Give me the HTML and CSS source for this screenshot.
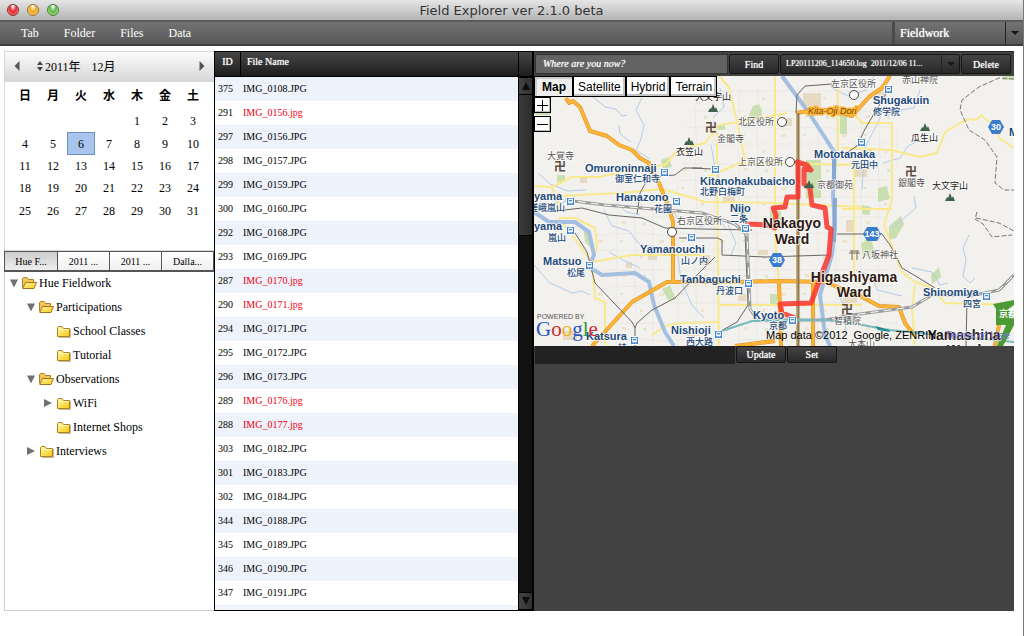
FILE: index.html
```html
<!DOCTYPE html>
<html lang="en">
<head>
<meta charset="utf-8">
<title>Field Explorer ver 2.1.0 beta</title>
<link rel="stylesheet" href="styles.css">
</head>
<body>
<svg class="sprites" aria-hidden="true">
  <defs>
    <linearGradient id="fold" x1="0" y1="0" x2="1" y2="1"><stop offset="0" stop-color="#fff9a0"/><stop offset="1" stop-color="#f8c915"/></linearGradient>
    <symbol id="closed" viewBox="0 0 15 14"><path d="M1.5 12.500V3.500L2.500 2.500H6L7.500 4.500H13.500V12.500Z" fill="url(#fold)" stroke="#b08024"/><path d="M2.500 5.500H12.500" stroke="#fffbd0"/><path d="M14.500 5V13.500H3" fill="none" stroke="#8b6b35" opacity=".5"/></symbol>
    <symbol id="open" viewBox="0 0 15 14"><path d="M.5 11.500V2.500L1.500 1.500H5L6.500 3.500H11.500V6" fill="#f3c65a" stroke="#b08024"/><path d="M.8 12.500L3.500 6.500H14.500L12 12.500Z" fill="url(#fold)" stroke="#a4731f"/></symbol>
    <symbol id="down" viewBox="0 0 10 10"><path d="M1 1.500H9L5 9.500Z" fill="#6b726f"/></symbol>
    <symbol id="right" viewBox="0 0 10 10"><path d="M1 1L9 5L1 9Z" fill="#6b726f"/></symbol>
  </defs>
</svg>
<div class="window">
  <header class="titlebar">
    <div class="lights"><button class="light red" aria-label="Close"></button><button class="light amber" aria-label="Minimize"></button><button class="light green" aria-label="Zoom"></button></div>
    <h1 class="title">Field Explorer ver 2.1.0 beta</h1>
  </header>
  <nav class="menubar">
    <button class="menu">Tab</button><button class="menu">Folder</button><button class="menu">Files</button><button class="menu">Data</button>
    <div class="combo project"><select class="combo-select" aria-label="Project"><option>Fieldwork</option></select><span class="combo-arrow"></span></div>
  </nav>
  <main class="panels">
    <aside class="side">
      <section class="calendar">
        <div class="cal-head">
          <button class="step" aria-label="Previous month"><svg width="6" height="10"><path d="M5.500 0V10L.5 5Z" fill="#555"/></svg></button>
          <button class="year"><svg width="6" height="10"><path d="M0 4L3 0L6 4ZM0 6L3 10L6 6Z" fill="#444"/></svg>2011年</button>
          <span class="month">12月</span>
          <button class="step next" aria-label="Next month"><svg width="6" height="10"><path d="M.5 0V10L5.500 5Z" fill="#555"/></svg></button>
        </div>
        <table class="days">
          <thead><tr><th>日</th><th>月</th><th>火</th><th>水</th><th>木</th><th>金</th><th>土</th></tr></thead>
          <tbody>
            <tr><td></td><td></td><td></td><td></td><td>1</td><td>2</td><td>3</td></tr>
            <tr><td>4</td><td>5</td><td class="today">6</td><td>7</td><td>8</td><td>9</td><td>10</td></tr>
            <tr><td>11</td><td>12</td><td>13</td><td>14</td><td>15</td><td>16</td><td>17</td></tr>
            <tr><td>18</td><td>19</td><td>20</td><td>21</td><td>22</td><td>23</td><td>24</td></tr>
            <tr><td>25</td><td>26</td><td>27</td><td>28</td><td>29</td><td>30</td><td>31</td></tr>
          </tbody>
        </table>
      </section>
      <div class="tabs"><button class="tab active">Hue F...</button><button class="tab">2011 ...</button><button class="tab">2011 ...</button><button class="tab">Dalla...</button></div>
      <ul class="tree">
        <li><div class="node"><svg class="tri"><use href="#down"/></svg><svg class="folder"><use href="#open"/></svg>Hue Fieldwork</div>
          <ul>
            <li><div class="node"><svg class="tri"><use href="#down"/></svg><svg class="folder"><use href="#open"/></svg>Participations</div>
              <ul>
                <li><div class="node"><span class="tri"></span><svg class="folder"><use href="#closed"/></svg>School Classes</div></li>
                <li><div class="node"><span class="tri"></span><svg class="folder"><use href="#closed"/></svg>Tutorial</div></li>
              </ul></li>
            <li><div class="node"><svg class="tri"><use href="#down"/></svg><svg class="folder"><use href="#open"/></svg>Observations</div>
              <ul>
                <li><div class="node"><svg class="tri"><use href="#right"/></svg><svg class="folder"><use href="#closed"/></svg>WiFi</div></li>
                <li><div class="node"><span class="tri"></span><svg class="folder"><use href="#closed"/></svg>Internet Shops</div></li>
              </ul></li>
            <li><div class="node"><svg class="tri"><use href="#right"/></svg><svg class="folder"><use href="#closed"/></svg>Interviews</div></li>
          </ul></li>
      </ul>
    </aside>
    <section class="files">
      <div class="list">
        <table class="file-table">
          <thead><tr><th class="id">ID</th><th>File Name</th></tr></thead>
          <tbody>
            <tr><td>375</td><td>IMG_0108.JPG</td></tr>
            <tr><td>291</td><td class="hot">IMG_0156.jpg</td></tr>
            <tr><td>297</td><td>IMG_0156.JPG</td></tr>
            <tr><td>298</td><td>IMG_0157.JPG</td></tr>
            <tr><td>299</td><td>IMG_0159.JPG</td></tr>
            <tr><td>300</td><td>IMG_0160.JPG</td></tr>
            <tr><td>292</td><td>IMG_0168.JPG</td></tr>
            <tr><td>293</td><td>IMG_0169.JPG</td></tr>
            <tr><td>287</td><td class="hot">IMG_0170.jpg</td></tr>
            <tr><td>290</td><td class="hot">IMG_0171.jpg</td></tr>
            <tr><td>294</td><td>IMG_0171.JPG</td></tr>
            <tr><td>295</td><td>IMG_0172.JPG</td></tr>
            <tr><td>296</td><td>IMG_0173.JPG</td></tr>
            <tr><td>289</td><td class="hot">IMG_0176.jpg</td></tr>
            <tr><td>288</td><td class="hot">IMG_0177.jpg</td></tr>
            <tr><td>303</td><td>IMG_0182.JPG</td></tr>
            <tr><td>301</td><td>IMG_0183.JPG</td></tr>
            <tr><td>302</td><td>IMG_0184.JPG</td></tr>
            <tr><td>344</td><td>IMG_0188.JPG</td></tr>
            <tr><td>345</td><td>IMG_0189.JPG</td></tr>
            <tr><td>346</td><td>IMG_0190.JPG</td></tr>
            <tr><td>347</td><td>IMG_0191.JPG</td></tr>
            <tr><td></td><td></td></tr>
          </tbody>
        </table>
      </div>
      <div class="scroll">
        <div class="scroll-cap"></div>
        <button class="scroll-btn" aria-label="Scroll up"><svg width="8" height="8"><path d="M4 0L8 8H0Z" fill="#0c0c0c"/></svg></button>
        <div class="thumb"></div>
        <div class="track"></div>
        <button class="scroll-btn" aria-label="Scroll down"><svg width="8" height="8"><path d="M4 8L8 0H0Z" fill="#0c0c0c"/></svg></button>
      </div>
    </section>
    <section class="place">
      <div class="toolbar">
        <input class="where" type="text" placeholder="Where are you now?" aria-label="Where are you now?">
        <button class="dark">Find</button>
        <div class="combo log"><select class="combo-select" aria-label="Log file"><option>LP20111206_114650.log&nbsp; 2011/12/06 11...</option></select><span class="combo-arrow"></span></div>
        <button class="dark">Delete</button>
      </div>
      <div class="map">
        <svg class="map-art" viewBox="534 76 480 270" preserveAspectRatio="xMidYMid slice">
          <defs>
            <symbol id="stn" viewBox="0 0 9 9"><rect x=".5" y=".5" width="8" height="8" rx="1" fill="#3f83cc" stroke="#fff"/><path d="M2.500 2H6.500V6H2.500ZM3 7.500L3.500 6.500M6 7.500L5.500 6.500" fill="#fff" stroke="#fff" stroke-width=".6"/><path d="M3 3H6V4.300H3Z" fill="#3f83cc"/></symbol>
            <symbol id="mt" viewBox="0 0 10 8"><path d="M0 8L2 4L3 5L5 0L7 5L8 3L10 8Z" fill="#40614c"/></symbol>
            <pattern id="streets" width="61" height="53" patternUnits="userSpaceOnUse"><path d="M0 5H61M0 22L30 21L61 24M0 38H61M7 0V53M24 0L26 53M43 0V53" stroke="#e8e6e1" stroke-width=".8" fill="none"/><path d="M12 9h4v3h-4zM49 28h5v3h-5zM30 44h3v3h-3z" fill="#efe3cd"/><path d="M33 10h3v3h-3zM10 28h3v2h-3z" fill="#dce7cb"/></pattern>
          </defs>
          <rect x="534" y="76" width="480" height="270" fill="#f3f1ed"/>
          <path d="M690 90H890L900 150L885 225L900 346H600L595 235L680 180Z" fill="url(#streets)"/>
          <g fill="#c9dfaf">
            <path d="M534 111h16v4h-16zM753 106l6-2 3 6-1 8-8 3-4-6zM661 160l8-3 3 10-9 2zM806 160h15v38h-15zM770 211h11v13h-11zM889 226l12-10 3 8-8 14-7 2zM861 243l10-3 4 12-12 6zM931 275l8-8 2 10-9 7zM662 289l8-4 6 14-8 1zM878 188l9-2 3 13-12 3zM583 225l7 10 3 15-8-8zM737 205h9v10h-9zM770 294h7v10h-7zM840 110h7v24h-7zM718 124h7v6h-7zM1003 76h11v4h-11zM557 175h8v7h-8zM862 205l9 2-2 8-7-1z"/>
          </g>
          <g fill="#e7dac3">
            <path d="M803 93h18v13h-18zM853 165h14v12h-14zM648 252h9v8h-9zM700 255h10v10h-10zM758 250h10v5h-10zM563 331h14v9h-14zM862 148h10v9h-10zM723 194h12v8h-12zM846 220h8v12h-8zM738 294h8v7h-8zM785 118h7v8h-7zM626 262h6v6h-6zM687 330h12v6h-12zM843 295h14v8h-14zM580 178h7v5h-7zM878 91h7v5h-7z"/>
          </g>
          <g class="stream">
            <path d="M593 97L605 107L616 109L622 116L627 115M642 98L636 110L644 125L641 139L636 150L650 159M619 125L620 134L631 142M617 203L626 212L640 215M604 210L612 226L629 231L640 245L660 247M534 265L550 283L572 293L582 291L590 295M609 252L623 260L640 268M711 145L714 163L719 178L714 196M720 88L724 107L713 118M728 225L736 243L731 255M699 227L719 220L727 230M663 204L674 212L680 225M874 76L866 90L848 96L832 88M887 116L900 110L914 108L920 90M914 196L916 208L904 218L892 229M969 235L963 248L966 260L963 276L970 283L975 278M912 268L932 272L940 285L948 283M838 295L848 312L845 330M856 270L872 276L877 290L902 296M883 163L900 158L908 146L916 142M884 110L865 148L862 190M552 200L562 203L575 196M677 248L681 281L692 305L704 318M538 173L550 184L568 191L586 190"/>
          </g>
          <g class="minor">
            <path d="M534 186L552 187L572 177L599 177L632 170L665 165L675 153L689 147L705 143L719 125L739 122L787 113"/>
            <path d="M534 194L560 196L620 193L662 189L690 197L705 202L775 203L862 207"/>
            <path d="M719 76L729 87L737 122L745 160M717 133V183L719 346M775 76V240L779 281M740 163L862 165M705 178L740 163M838 88V155M852 112L862 123H892V200L884 225L889 238L902 272L915 282L932 288L945 303L1014 305M915 285L912 308L915 345"/>
            <path d="M842 148L892 150L919 157L937 153L945 132L962 122L970 119L976 120L982 115L985 119L995 125L999 138L1014 148M854 168V280M842 209H892"/>
            <path d="M559 218L575 218L595 228L597 248L592 262L595 298L605 302V345M592 262L632 255H705M559 218L592 262M720 305H862M652 335L665 326L682 323L719 322M552 187L560 211"/>
          </g>
          <g class="river">
            <path d="M782 76L809 113L835 153L833 195L835 225L832 255L820 295L825 335L830 346"/>
            <path d="M534 212L549 222L575 222L589 232L594 255L589 267L602 275L635 273L649 282L654 305L665 332L674 346"/>
            <path d="M834 155V187M835 198L834 242" stroke="#86a8d2"/>
          </g>
          <g class="major-edge"><path id="majors" d="M566 98L569 103L573 101L580 107L590 131L607 136L619 145L632 150L640 158L649 163L659 183L669 208L673 222V282M592 346L632 302L667 282H735L779 281L825 282L862 297L879 306L899 307L905 323L914 335M796 113L809 111L832 110L852 116L869 97L882 88L890 76M735 346L775 341M779 281L781 346M813 281V346M995 346L999 325"/></g>
          <use href="#majors" class="major"/>
          <path d="M798 113V346" stroke="#8b7a59" stroke-width="3"/><path d="M797 113V346" stroke="#d7a652" stroke-width="1"/>
          <g class="rail">
            <path d="M564 210L582 208L609 215L642 218L665 228L702 229L752 230M679 238H717L722 240V255L765 257L829 255M852 234H882L890 245L902 268L919 278L935 288M575 233L587 252L595 283L632 322L635 328V346M635 328L637 323L652 310L675 298L702 270L715 257M832 84L805 86L797 95L796 113M702 168H684L675 175L649 177L640 193L637 214M692 168L712 169M845 154L857 146L865 129L887 92M966 346L967 300M745 232L748 305L737 322L719 332M837 234H852"/>
          </g>
          <path d="M565 200L605 205L702 213L735 224L747 235L750 309L757 320H825L852 315L912 307L932 295L975 295L999 290L1014 275" fill="none" stroke="#9b9b9b" stroke-width="3"/>
          <path d="M565 200L605 205L702 213L735 224L747 235L750 309L757 320H825L852 315L912 307L932 295L975 295L999 290L1014 275" fill="none" stroke="#fff" stroke-width="1" stroke-dasharray="8 5"/>
          <path d="M719 332L752 321L792 320L825 320L852 323L889 330L1014 342" fill="none" stroke="#77b9bc" stroke-width="2"/><path d="M875 326L889 330L890 332L878 330Z" fill="#21898e"/>
          <path d="M1014 79L999 78L979 87L962 100L960 110L969 130L985 140L997 157L995 183L1004 190H1014M977 212L975 219L983 224L992 237L1012 235M976 218L999 223L1014 231" fill="none" stroke="#777" stroke-dasharray="5 2"/>
          <path d="M993 304L1014 300V305L1007 310H1014V325H996V309ZM1006 325L997 346H1003L1014 325Z" fill="#4c9a35"/>
          <g class="track-line"><path d="M798 162V197H787L785 207L773 208L776 215L775 228L767 225L747 224V228M797 162L807 165L811 170L804 169V184L810 188L812 205L825 208L827 227L831 229L829 255L811 303L780 304L782 313L795 318"/></g>
          <circle cx="747" cy="228" r="3" fill="#f4433d"/>
          <g fill="#fff" stroke="#4a4542"><circle cx="782" cy="122" r="4.500"/><circle cx="790" cy="162" r="4.500"/><circle cx="854" cy="95" r="4.500"/><circle cx="672" cy="232" r="4.500"/></g>
          <g><use href="#stn" x="660" y="168" width="9" height="9"/><use href="#stn" x="672" y="197" width="9" height="9"/><use href="#stn" x="711" y="165" width="9" height="9"/><use href="#stn" x="884" y="85" width="9" height="9"/><use href="#stn" x="857" y="138" width="9" height="9"/><use href="#stn" x="566" y="197" width="9" height="9"/><use href="#stn" x="566" y="226" width="9" height="9"/><use href="#stn" x="585" y="261" width="9" height="9"/><use href="#stn" x="687" y="233" width="9" height="9"/><use href="#stn" x="741" y="224" width="9" height="9"/><use href="#stn" x="744" y="279" width="9" height="9"/><use href="#stn" x="788" y="316" width="9" height="9"/><use href="#stn" x="714" y="330" width="9" height="9"/><use href="#stn" x="630" y="336" width="9" height="9"/><use href="#stn" x="982" y="292" width="9" height="9"/></g>
          <g><use href="#mt" x="684" y="137" width="10" height="8"/><use href="#mt" x="708" y="104" width="10" height="8"/><use href="#mt" x="920" y="123" width="10" height="8"/><use href="#mt" x="945" y="193" width="10" height="8"/><use href="#mt" x="804" y="180" width="10" height="8"/></g>
          <g fill="#3b7dcc"><path d="M988 127L992 120H1000L1004 127L1000 134H992ZM863 234L867 227H877L881 234L877 241H867ZM769 260L773 253H781L785 260L781 267H773Z"/></g>
          <g class="shield"><text x="996" y="130">30</text><text x="872" y="237">143</text><text x="777" y="263">38</text></g>
          <path d="M850 251H859M849 253H860M852 251V260M857 251V260" stroke="#776b60" fill="none"/>
          <g class="area"><text x="547" y="159">大覚寺</text><text x="717" y="142">金閣寺</text><text x="738" y="125">北区役所</text><text x="738" y="165">上京区役所</text><text x="831" y="87">左京区役所</text><text x="902" y="83">赤山禅院</text><text x="817" y="188">京都御苑</text><text x="898" y="186">銀閣寺</text><text x="677" y="224">右京区役所</text><text x="862" y="258">八坂神社</text><text x="834" y="324">智積院</text></g>
          <g class="peak"><text x="676" y="155">衣笠山</text><text x="695" y="100">大文字山</text><text x="911" y="141">瓜生山</text><text x="932" y="189">大文字山</text></g><text class="area" x="848" y="347">大本山</text>
          <g class="temple"><text x="554" y="171">卍</text><text x="705" y="132">卍</text><text x="905" y="176">卍</text><text x="841" y="314">卍</text></g>
          <g class="station">
            <text x="585" y="172">Omuroninnaji</text><text class="jp" x="615" y="182">御室仁和寺</text>
            <text x="616" y="201">Hanazono</text><text class="jp" x="654" y="212">花園</text>
            <text x="700" y="185">Kitanohakubaicho</text><text class="jp" x="700" y="195">北野白梅町</text>
            <text x="534" y="200">yama</text><text class="jp" x="529" y="211">嵯峨嵐山</text><text x="534" y="230">yama</text><text class="jp" x="548" y="241">嵐山</text>
            <text x="543" y="265">Matsuo</text><text class="jp" x="567" y="276">松尾</text>
            <text x="640" y="253">Yamanouchi</text><text class="jp" x="681" y="264">山ノ内</text>
            <text x="680" y="283">Tanbaguchi</text><text class="jp" x="716" y="294">丹波口</text>
            <text x="671" y="334">Nishioji</text><text class="jp" x="686" y="345">西大路</text>
            <text x="586" y="340">Katsura</text><text class="jp" x="618" y="351">桂</text>
            <text x="730" y="212">Nijo</text><text class="jp" x="730" y="222">二条</text>
            <text x="753" y="319">Kyoto</text><text class="jp" x="769" y="329">京都</text>
            <text x="873" y="104">Shugakuin</text><text class="jp" x="873" y="115">修学院</text>
            <text x="814" y="158">Mototanaka</text><text class="jp" x="851" y="168">元田中</text>
            <text x="923" y="296">Shinomiya</text><text class="jp" x="963" y="307">四宮</text><text x="1009" y="136">M</text>
          </g>
          <text class="road" x="808" y="114">Kita-Oji Dori</text>
          <text class="sign" x="999" y="317">京都</text>
          <g class="ward"><text x="792" y="228">Nakagyo</text><text x="792" y="244">Ward</text><text x="854" y="282">Higashiyama</text><text x="854" y="297">Ward</text><text x="964" y="340">Yamashina</text><text x="964" y="355">Ward</text></g>
          <text class="powered" x="537" y="319">POWERED BY</text>
          <text class="google" x="536" y="336"><tspan fill="#2857c4">G</tspan><tspan fill="#d42c2b">o</tspan><tspan fill="#e9b51c">o</tspan><tspan fill="#2857c4">g</tspan><tspan fill="#2b9a3e">l</tspan><tspan fill="#d42c2b">e</tspan></text>
          <text class="credit" x="766" y="339">Map data ©2012&#160; Google, ZENRIN</text>
          <a href="#terms"><text class="terms" x="945" y="339">Terms of Use</text></a>
        </svg>
        <div class="map-types"><button class="map-btn on">Map</button><button class="map-btn">Satellite</button><button class="map-btn">Hybrid</button><button class="map-btn">Terrain</button></div>
        <div class="zoomer"><button class="zoom" aria-label="Zoom in"><svg width="11" height="11"><path d="M0 5.500H11M5.500 0V11" stroke="#000"/></svg></button><button class="zoom" aria-label="Zoom out"><svg width="11" height="11"><path d="M0 5.500H11" stroke="#000"/></svg></button></div>
      </div>
      <div class="actions"><div class="status"></div><button class="dark">Update</button><button class="dark">Set</button></div>
    </section>
  </main>
</div>
</body>
</html>
```
FILE: styles.css
```css
* { box-sizing: border-box; }
body { margin: 0; background: #fff; color: #000; font: 12px "Liberation Serif", "Noto Sans CJK JP", serif; }
button, input, select { margin: 0; padding: 0; border: 0; border-radius: 0; background: none; color: inherit; font: inherit; }
ul { margin: 0; padding: 0; list-style: none; }
.sprites { position: absolute; width: 0; height: 0; }
.window { display: flex; flex-direction: column; height: 100vh; border-right: 1px solid #777; }

.titlebar { display: grid; grid-template-columns: 1fr auto 1fr; align-items: center; height: 20px; padding: 0 7px; background: linear-gradient(#e6e6e6, #b4b4b4); }
.lights { display: flex; gap: 8px; }
.light { width: 12px; height: 12px; border: 1px solid; border-radius: 50%; }
.red { border-color: #8a3030; background: radial-gradient(ellipse at 50% 10%, #fff 5%, #e4282c 45%, #ff9a92); }
.amber { border-color: #98702c; background: radial-gradient(ellipse at 50% 10%, #fff 5%, #f1a51d 45%, #ffe98a); }
.green { border-color: #477c35; background: radial-gradient(ellipse at 50% 10%, #fff 5%, #5fb548 45%, #c9f59b); }
.title { margin: 0; color: #333; font: 13px "DejaVu Sans", sans-serif; }

.menubar { display: flex; align-items: stretch; height: 26px; padding-left: 21px; gap: 25px; border-top: 2px solid #5b5b5b; border-bottom: 2px solid #3c3c3c; background: linear-gradient(#737373, #585858); color: #fff; text-shadow: 0 0 1px #eee; }
.combo { position: relative; display: flex; }
.combo-select { flex: 1; min-width: 0; appearance: none; text-shadow: inherit; }
.combo-select option { color: #000; }
.combo-arrow { position: absolute; top: 0; right: 0; bottom: 0; display: grid; place-items: center; pointer-events: none; border-left: 1px solid #222; }
.combo-arrow::before { content: ""; border: 4px solid transparent; border-top-color: #161616; border-bottom: 0; }
.project { width: 131px; margin-left: auto; border-left: 3px solid #4a4a4a; }
.project .combo-select { padding-left: 5px; }
.project .combo-arrow { width: 18px; }

.panels { display: grid; grid-template-columns: 210px 320px 1fr; flex: 1; min-height: 0; padding: 5px 9px 25px 4px; }
.side { display: flex; flex-direction: column; min-height: 0; }
.calendar { height: 200px; border: 1px solid #d8d8d8; border-right: 0; }
.cal-head { display: flex; align-items: center; height: 30px; padding: 0 9px 2px; background: linear-gradient(#fbfbfb, #d6d6d6); }
.step { display: grid; }
.year { display: flex; align-items: center; gap: 2px; margin: 0 11px 0 17px; }
.next { margin-left: auto; }
.days { width: 196px; height: 140px; margin: 0 auto 0 6px; border-spacing: 0; table-layout: fixed; text-align: center; line-height: 14px; }
.days th { height: 28px; padding: 0; font-weight: bold; }
.days td { height: 22px; padding: 0; border: 1px solid transparent; }
.days .today { border: 1px solid #6d91c0; background: #a9c5ee; }
.tabs { display: grid; grid-template-columns: repeat(4, 1fr); height: 21px; border: 1px solid #555; border-width: 1px 1px 2px; }
.tab { border-left: 1px solid #555; background: linear-gradient(#fff, #f0f0f0); font-size: 10px; }
.tab.active { border-left: 0; background: linear-gradient(#ccc, #eee); }
.tree { flex: 1; border: 1px solid #ccc; border-width: 0 0 1px 1px; padding-left: 4px; }
.tree ul { padding-left: 17px; }
.node { display: flex; align-items: center; height: 24px; padding-bottom: 2px; gap: 2px; }
.tri { width: 10px; height: 10px; margin-right: 1px; }
.folder { width: 15px; height: 14px; }

.files { display: grid; grid-template-columns: 1fr 16px; min-height: 0; border: 1px solid #000; border-right: 0; font-size: 10px; }
.list { overflow: hidden; min-height: 0; }
.file-table { width: 100%; border-spacing: 0; table-layout: fixed; }
.file-table th { height: 25px; padding: 0 6px 5px; border-bottom: 1px solid #000; background: linear-gradient(#464646, #1d1d1d); color: #fff; font-weight: normal; text-align: left; text-shadow: 0 0 1px #ddd; }
.file-table .id { width: 26px; padding: 0 0 5px; border-right: 1px solid #000; text-align: center; }
.file-table td { height: 24px; padding: 0 2px 2px; }
.file-table td:first-child { padding-left: 3px; }
.file-table tbody tr:nth-child(odd) { background: #edf2fb; }
.hot { color: #f00010; }
.scroll { display: flex; flex-direction: column; border: 1px solid #000; border-width: 0 2px 0 1px; background: #111; }
.scroll-cap { height: 25px; border-bottom: 1px solid #000; background: linear-gradient(#464646, #1d1d1d); }
.scroll-btn { display: grid; place-items: center; height: 18px; border: 1px solid #000; border-width: 1px 0; background: linear-gradient(90deg, #444, #303030); }
.thumb { height: 141px; border-bottom: 1px solid #000; background: linear-gradient(90deg, #3b3b3b, #2c2c2c); }
.track { flex: 1; }

.place { display: flex; flex-direction: column; min-width: 0; background: #424242; color: #fff; font-size: 10px; }
.toolbar { display: flex; align-items: stretch; height: 25px; gap: 1px; padding: 2px 3px 2px 1px; border-top: 1px solid #222; text-shadow: 0 0 1px #ddd; }
.where { flex: 1; min-width: 0; padding: 0 7px 2px; border: 1px solid #333; background: #636363; font-style: italic; text-shadow: inherit; }
.where::placeholder { color: #fff; opacity: 1; }
.dark { width: 50px; border: 1px solid #151515; border-radius: 2px; background: linear-gradient(#444, #282828); text-shadow: 0 0 1px #ddd; }
.log { width: 180px; border: 1px solid #151515; border-radius: 2px; background: linear-gradient(#444, #282828); }
.log .combo-select { padding: 0 0 1px 5px; font-size: 8px; }
.log .combo-arrow { width: 18px; }

.map { position: relative; height: 270px; overflow: hidden; }
.map-art { display: block; width: 100%; height: 100%; }
.map-types { position: absolute; top: 0; left: 0; display: flex; }
.map-btn { height: 21px; padding: 0 4px; border: 1px solid #000; background: #fff; box-shadow: inset -2px -2px #c4c4c4; color: #000; font: 12px "Liberation Sans", sans-serif; }
.map-btn.on { padding: 0 6px 0 7px; background: #eee; box-shadow: inset 2px 2px #ccc; font-weight: bold; }
.zoomer { position: absolute; top: 21px; left: 0; display: grid; gap: 3px; }
.zoom { display: grid; place-items: center; width: 17px; height: 16px; border: 1px solid #000; background: #fff; box-shadow: inset -1px -1px #bbb; }
.stream { fill: none; stroke: #b3cdea; stroke-width: 1; }
.minor { fill: none; stroke: #fae98c; stroke-width: 2; stroke-linejoin: round; }
.river { fill: none; stroke: #a5bfe2; stroke-width: 4; stroke-linejoin: round; }
.major-edge { fill: none; stroke: #d5902b; stroke-width: 4; stroke-linejoin: round; }
.major { fill: none; stroke: #fdb436; stroke-width: 3; stroke-linejoin: round; }
.rail { fill: none; stroke: #666; stroke-width: 1; stroke-linejoin: round; }
.track-line { fill: none; stroke: #f9322c; stroke-width: 5; stroke-linejoin: round; stroke-linecap: round; opacity: .85; }
.shield { fill: #fff; font: bold 9px "Liberation Sans", sans-serif; text-anchor: middle; }
.area { fill: #555; font: 9px "Noto Sans CJK JP", sans-serif; }
.peak { fill: #222; font: 9px "Noto Sans CJK JP", sans-serif; }
.temple { fill: #5b4a3c; font: bold 12px "Noto Sans CJK JP", sans-serif; }
.station, .ward, .area, .peak { paint-order: stroke; stroke: #fff; stroke-width: 2px; stroke-opacity: .7; stroke-linejoin: round; }
.station { fill: #1d4a7c; font: bold 11px "Liberation Sans", sans-serif; }
.jp { font: 500 9px "Noto Sans CJK JP", sans-serif; }
.road { fill: #7a4b08; font: italic 9px "Liberation Sans", sans-serif; paint-order: stroke; stroke: #fdb436; stroke-width: 3px; }
.sign { fill: #fff; font: bold 9px "Noto Sans CJK JP", sans-serif; }
.ward { fill: #2c1a14; font: bold 14px "Liberation Sans", sans-serif; text-anchor: middle; }
.powered { fill: #555; font: 7px "Liberation Sans", sans-serif; }
.google { font: 21px "Liberation Serif", serif; }
.credit { fill: #000; font: 11px "Liberation Sans", sans-serif; }
.terms { fill: #7777cc; font: 11px "Liberation Sans", sans-serif; }
.actions { display: flex; height: 18px; gap: 1px; padding: 0 0 0 1px; }
.actions .dark { height: 17px; }
.status { width: 200px; height: 18px; background: #222; }
```
